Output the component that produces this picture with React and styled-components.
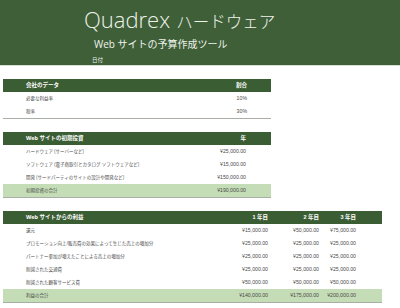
import React from "react";
import styled, { createGlobalStyle } from "styled-components";

const GlobalStyle = createGlobalStyle`
  body {
    margin: 0;
    background: #ffffff;
    font-family: "Open Sans", "Noto Sans CJK JP", sans-serif;
  }
`;

const Page = styled.div`
  width: 400px;
  min-height: 308px;
  background: #ffffff;
`;

const Banner = styled.header`
  height: 66px;
  background: #3f5f39;
  color: #eef3ea;
  padding: 6px 0 0 84px;
  box-sizing: border-box;
  display: flex;
  flex-direction: column;
  border-bottom: 1px solid #d9ded6;
`;

const Title = styled.h1`
  margin: 0;
  font-family: "Open Sans", "Noto Sans CJK JP", sans-serif;
  font-weight: 300;
  font-size: 22px;
  line-height: 26px;
`;

const TitleJa = styled.span`
  font-family: "Noto Sans CJK JP", sans-serif;
  font-weight: 300;
  font-size: 16.5px;
  margin-left: 6px;
`;

const Subtitle = styled.h2`
  margin: 3px 0 0 10px;
  font-weight: 400;
  font-size: 10px;
  line-height: 14px;
`;

const DateLabel = styled.div`
  margin: 5px 0 0 8px;
  font-size: 5.5px;
  line-height: 8px;
`;

const Body = styled.main`
  padding: 13px 0 0 3px;
  display: flex;
  flex-direction: column;
  gap: 13px;
`;

const Table = styled.section`
  width: ${(p) => p.$width}px;
  display: flex;
  flex-direction: column;
  flex-shrink: 0;
`;

const Row = styled.div`
  display: grid;
  grid-template-columns: ${(p) => p.$cols};
  align-items: center;
  flex: 0 0 13px;
  height: 13px;
  padding: 0 ${(p) => p.$padRight}px 0 23px;
  background: ${(p) =>
    p.$kind === "head" ? "#3b5d34" : p.$kind === "total" ? "#c4ddb6" : "transparent"};
  color: ${(p) => (p.$kind === "head" ? "#ffffff" : "#4a4a4a")};
  font-weight: ${(p) => (p.$kind === "head" ? 700 : 400)};
  border-bottom: ${(p) => (p.$last ? "1.5px solid #a9aea6" : "none")};
`;

const Label = styled.span`
  font-size: ${(p) => (p.$head ? "5.5px" : "4.5px")};
  white-space: nowrap;
  line-height: 1;
`;

const Value = styled.span`
  font-family: "Liberation Sans", "Noto Sans CJK JP", sans-serif;
  font-size: ${(p) => (p.$head ? "5.5px" : "5.2px")};
  text-align: right;
  white-space: nowrap;
  line-height: 1;
`;

const tables = [
  {
    width: 268,
    cols: "1fr 40px",
    padRight: 24,
    head: ["会社のデータ", "割合"],
    rows: [
      ["必要な利益率", "10%"],
      ["税率", "30%"],
    ],
  },
  {
    width: 268,
    cols: "1fr 50px",
    padRight: 25,
    head: ["Web サイトの初期投資", "年"],
    rows: [
      ["ハードウェア (サーバーなど)", "¥25,000.00"],
      ["ソフトウェア (電子商取引とカタログ ソフトウェアなど)", "¥15,000.00"],
      ["開発 (サードパーティのサイトの設計や開発など)", "¥150,000.00"],
    ],
    total: ["初期投資の合計", "¥190,000.00"],
  },
  {
    width: 379,
    cols: "1fr 52px 51px 37px",
    padRight: 26,
    head: ["Web サイトからの利益", "1 年目", "2 年目", "3 年目"],
    rows: [
      ["還元", "¥15,000.00", "¥50,000.00", "¥75,000.00"],
      ["プロモーション向上/販売費の効果によって生じた売上の増加分", "¥25,000.00", "¥25,000.00", "¥25,000.00"],
      ["パートナー参加が増えたことによる売上の増加分", "¥25,000.00", "¥25,000.00", "¥25,000.00"],
      ["削減された交通費", "¥25,000.00", "¥25,000.00", "¥25,000.00"],
      ["削減された顧客サービス費", "¥50,000.00", "¥50,000.00", "¥50,000.00"],
    ],
    total: ["利益の合計", "¥140,000.00", "¥175,000.00", "¥200,000.00"],
  },
];

const DataTable = ({ t }) => {
  const lastIndex = t.rows.length - 1;
  return (
    <Table $width={t.width}>
      <Row $cols={t.cols} $padRight={t.padRight} $kind="head">
        <Label $head>{t.head[0]}</Label>
        {t.head.slice(1).map((h) => (
          <Value key={h} $head>
            {h}
          </Value>
        ))}
      </Row>
      {t.rows.map((r, i) => (
        <Row key={r[0]} $cols={t.cols} $padRight={t.padRight} $last={!t.total && i === lastIndex}>
          <Label>{r[0]}</Label>
          {r.slice(1).map((v, j) => (
            <Value key={j}>{v}</Value>
          ))}
        </Row>
      ))}
      {t.total && (
        <Row $cols={t.cols} $padRight={t.padRight} $kind="total" $last>
          <Label>{t.total[0]}</Label>
          {t.total.slice(1).map((v, j) => (
            <Value key={j}>{v}</Value>
          ))}
        </Row>
      )}
    </Table>
  );
};

const App = () => {
  return (
    <Page>
      <GlobalStyle />
      <Banner>
        <Title>
          Quadrex<TitleJa>ハードウェア</TitleJa>
        </Title>
        <Subtitle>Web サイトの予算作成ツール</Subtitle>
        <DateLabel>日付</DateLabel>
      </Banner>
      <Body>
        {tables.map((t) => (
          <DataTable key={t.head[0]} t={t} />
        ))}
      </Body>
    </Page>
  );
};

export default App;
